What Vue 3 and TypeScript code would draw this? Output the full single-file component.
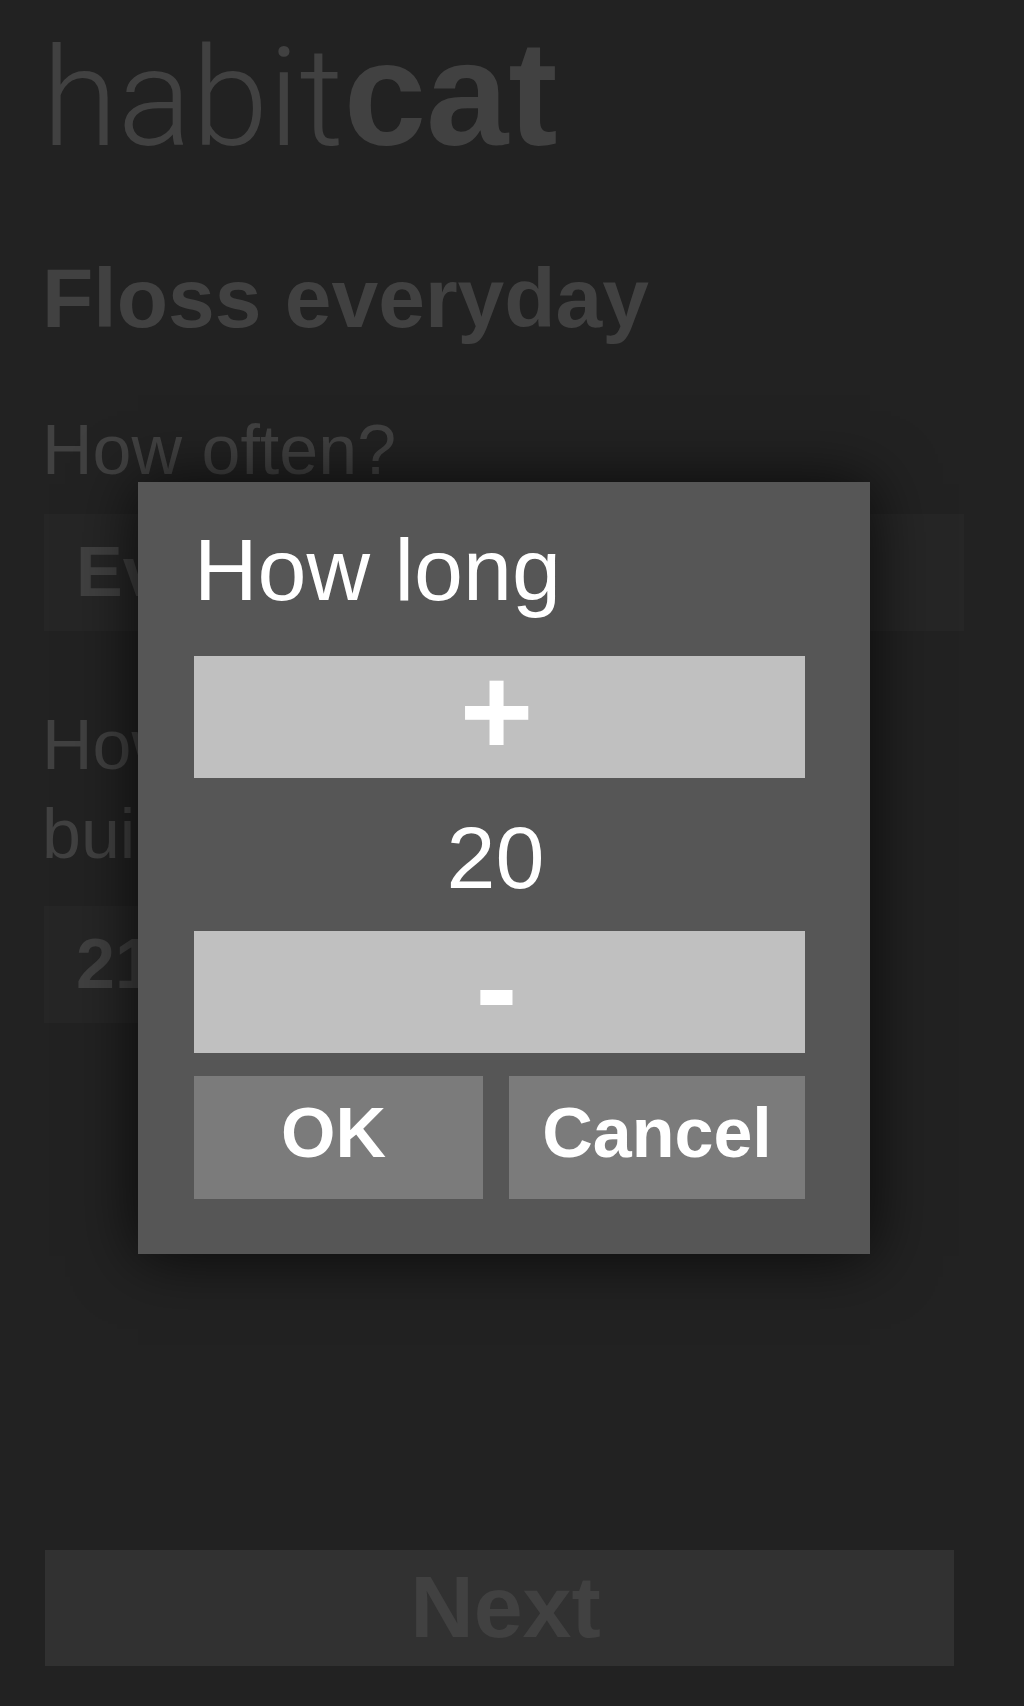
<script setup lang="ts">
import { ref } from 'vue'

const habit = ref('Floss everyday')
const frequency = ref('Everyday')
const days = ref('21 days')
const amount = ref(20)
const open = ref(true)

function step(delta: number) {
  amount.value = Math.max(1, amount.value + delta)
}

function confirm() {
  days.value = `${amount.value} days`
  open.value = false
}
</script>

<template>
  <div class="screen">
    <main class="page">
      <h1 class="logo"><span class="logo-light">habit</span><span class="logo-bold">cat</span></h1>
      <h2 class="habit">{{ habit }}</h2>
      <form class="form" @submit.prevent>
        <label class="label" for="frequency">How often?</label>
        <input id="frequency" v-model="frequency" class="field" type="text" />
        <label class="label label-long" for="days">How long to<br />build it?</label>
        <input id="days" v-model="days" class="field field-short" type="text" />
        <button class="next" type="submit">Next</button>
      </form>
    </main>

    <div v-if="open" class="overlay">
      <section class="dialog" role="dialog" aria-modal="true" aria-labelledby="dialog-title">
        <h2 id="dialog-title" class="title">How long</h2>
        <button class="step" type="button" aria-label="Increase" @click="step(1)">+</button>
        <output class="value">{{ amount }}</output>
        <button class="step" type="button" aria-label="Decrease" @click="step(-1)">-</button>
        <div class="actions">
          <button class="action action-ok" type="button" @click="confirm">OK</button>
          <button class="action" type="button" @click="open = false">Cancel</button>
        </div>
      </section>
    </div>
  </div>
</template>

<style>
body {
  margin: 0;
  background: #222222;
}
</style>

<style scoped>
.screen {
  position: relative;
  min-height: 100vh;
  display: flex;
  background: #222222;
  color: #414141;
  font-family: "Liberation Sans", Arial, Helvetica, sans-serif;
}

.screen * {
  box-sizing: border-box;
}

button,
input {
  margin: 0;
  border: 0;
  border-radius: 0;
  font-family: inherit;
  font-weight: 700;
}

.page {
  flex: 1;
  min-width: 0;
  display: flex;
  flex-direction: column;
  padding: 14px 60px 40px 42px;
}

.logo {
  height: 160px;
  margin: 0;
  font-size: 148px;
  line-height: 160px;
  font-weight: 400;
  white-space: nowrap;
}

.logo-light {
  font-family: Roboto, "Liberation Sans", sans-serif;
  font-size: 138px;
  font-weight: 300;
}

.logo-bold {
  font-weight: 700;
}

.habit {
  margin: 76px 0 0;
  font-size: 84px;
  line-height: 96px;
  font-weight: 700;
}

.form {
  flex: 1;
  display: flex;
  flex-direction: column;
  margin-top: 60px;
}

.label {
  font-size: 70px;
  line-height: 89px;
}

.label-long {
  margin-top: 70px;
}

.field {
  height: 117px;
  margin: 19px 0 0 2px;
  padding: 0 32px 2px;
  background: #262626;
  color: #414141;
  font-size: 70px;
}

.field-short {
  width: 60%;
  margin-top: 27px;
}

.next {
  height: 116px;
  margin: auto 10px 0 3px;
  padding: 0 0 2px 12px;
  background: #313131;
  color: #414141;
  font-size: 88px;
  line-height: 96px;
}

.overlay {
  position: absolute;
  inset: 0;
  display: flex;
  align-items: center;
  justify-content: center;
  padding: 30px 16px 0 0;
}

.dialog {
  width: calc(100% - 292px + 16px);
  display: flex;
  flex-direction: column;
  padding: 38px 65px 55px 56px;
  background: #565656;
  color: #ffffff;
  box-shadow: 0 2px 60px rgba(0, 0, 0, 0.76);
}

.title {
  margin: 0 0 36px;
  font-size: 88px;
  line-height: 100px;
  font-weight: 400;
}

.step {
  height: 122px;
  padding: 0 6px 10px 0;
  background: #c0c0c0;
  color: #ffffff;
  font-size: 126px;
  line-height: 110px;
}

.value {
  padding: 6px 8px 0 0;
  font-size: 88px;
  line-height: 147px;
  text-align: center;
}

.actions {
  display: grid;
  grid-template-columns: 289fr 296fr;
  gap: 26px;
  margin-top: 23px;
}

.action {
  min-width: 0;
  height: 123px;
  padding: 0 0 10px;
  background: #7b7b7b;
  color: #ffffff;
  font-size: 70px;
}

.action-ok {
  padding-right: 10px;
}
</style>
